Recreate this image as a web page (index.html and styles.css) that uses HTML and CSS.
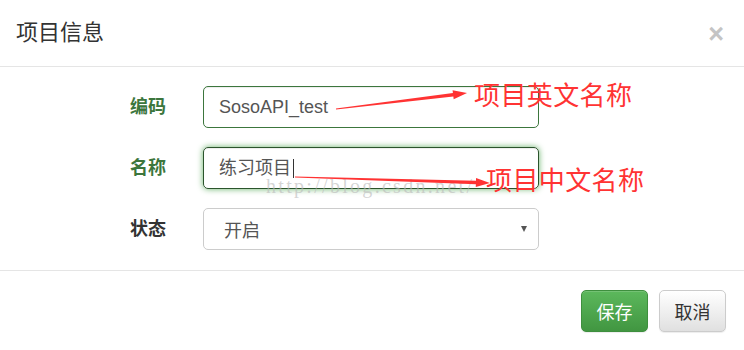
FILE: index.html
```html
<!DOCTYPE html>
<html lang="zh">
<head>
<meta charset="utf-8">
<title>项目信息</title>
<link rel="stylesheet" href="styles.css">
</head>
<body>
<div class="modal">
  <div class="modal-header">
    <h4 class="modal-title">项目信息</h4>
    <span class="close">×</span>
  </div>
  <div class="modal-body">
    <div class="form">
      <label class="label label-success">编码</label>
      <div class="control input-success">SosoAPI_test</div>
      <label class="label label-success">名称</label>
      <div class="control input-success input-focus">练习项目<span class="caret"></span></div>
      <label class="label">状态</label>
      <div class="control select"><span>开启</span><span class="select-arrow"></span></div>
    </div>
  </div>
  <div class="modal-footer">
    <button class="btn btn-success">保存</button>
    <button class="btn btn-default">取消</button>
  </div>
</div>

<div class="watermark">http://blog.csdn.net/</div>
<svg class="arrows" width="744" height="350" viewBox="0 0 744 350">
  <g transform="translate(336 109) rotate(-6.96)">
    <polygon points="0,-0.5 118,-1.7 118,-4.5 132,0 118,4.5 118,1.7 0,0.5" fill="#ff3333"/>
  </g>
  <g transform="translate(295 177) rotate(1.76)">
    <polygon points="0,-0.5 181,-1.7 181,-4.5 195,0 181,4.5 181,1.7 0,0.5" fill="#ff3333"/>
  </g>
</svg>
<div class="note note-en">项目英文名称</div>
<div class="note note-cn">项目中文名称</div>
</body>
</html>
```

FILE: styles.css
```css
html, body {
  margin: 0;
  padding: 0;
  background: #fff;
}
body {
  position: relative;
  width: 744px;
  height: 350px;
  overflow: hidden;
  font-family: "Liberation Sans", "Noto Sans CJK SC", sans-serif;
  color: #333;
}
.modal {
  width: 744px;
}
.modal-header {
  display: flex;
  justify-content: space-between;
  align-items: flex-start;
  height: 67px;
  box-sizing: border-box;
  padding: 15px 20px 0 16px;
  border-bottom: 1px solid #e5e5e5;
}
.modal-title {
  margin: 0;
  font-family: "Noto Sans CJK SC", sans-serif;
  font-weight: normal;
  font-size: 22px;
  line-height: 31px;
  color: #333;
}
.close {
  font-family: "Liberation Sans", sans-serif;
  font-weight: bold;
  font-size: 27px;
  line-height: 27px;
  margin-top: 6px;
  color: #c4c4c4;
}
.modal-body {
  padding: 19px 0 20px 0;
  border-bottom: 1px solid #e5e5e5;
}
.form {
  display: grid;
  grid-template-columns: 166px 336px;
  column-gap: 37px;
  row-gap: 19px;
}
.label {
  font-family: "Noto Sans CJK SC", sans-serif;
  font-weight: bold;
  font-size: 18px;
  line-height: 26px;
  padding-top: 6px;
  text-align: right;
  color: #333;
}
.label-success {
  color: #3c763d;
}
.control {
  height: 42px;
  box-sizing: border-box;
  border: 1px solid #ccc;
  border-radius: 5px;
  padding: 0 15px;
  display: flex;
  align-items: center;
  font-size: 18px;
  line-height: 26px;
  color: #555;
  box-shadow: inset 0 1px 1px rgba(0,0,0,.075);
}
.input-success {
  border-color: #3c763d;
}
.input-focus {
  border-color: #2b542c;
  box-shadow: inset 0 1px 1px rgba(0,0,0,.075), 0 0 6px #67b168;
}
.caret {
  display: inline-block;
  width: 1px;
  height: 19px;
  margin-left: 2px;
  background: #333;
}
.select {
  justify-content: space-between;
  padding: 0 11px 0 20px;
  box-shadow: none;
  font-family: "Noto Sans CJK SC", sans-serif;
}
.select-arrow {
  width: 0;
  height: 0;
  border-left: 3.5px solid transparent;
  border-right: 3.5px solid transparent;
  border-top: 6px solid #555;
}
.modal-footer {
  display: flex;
  justify-content: flex-end;
  gap: 11px;
  padding: 19px 18px 19px 0;
}
.btn {
  width: 67px;
  height: 42px;
  box-sizing: border-box;
  border-radius: 5px;
  font-family: "Noto Sans CJK SC", sans-serif;
  font-size: 18px;
  line-height: 26px;
  padding: 0;
}
.btn-success {
  color: #fff;
  border: 1px solid #3e8f3e;
  background: linear-gradient(to bottom, #5cb85c 0%, #419641 100%);
  box-shadow: inset 0 1px 0 rgba(255,255,255,.15), 0 1px 1px rgba(0,0,0,.075);
}
.btn-default {
  color: #333;
  border: 1px solid #ccc;
  background: linear-gradient(to bottom, #fff 0%, #e0e0e0 100%);
  box-shadow: inset 0 1px 0 rgba(255,255,255,.15), 0 1px 1px rgba(0,0,0,.075);
}
.watermark {
  position: absolute;
  left: 266px;
  top: 174px;
  font-family: "Liberation Serif", serif;
  font-size: 20px;
  letter-spacing: 2.3px;
  line-height: 24px;
  color: rgba(185,185,185,0.6);
  pointer-events: none;
}
.arrows {
  position: absolute;
  left: 0;
  top: 0;
  pointer-events: none;
}
.note {
  position: absolute;
  font-family: "Noto Sans CJK SC", sans-serif;
  font-size: 26px;
  line-height: 26px;
  letter-spacing: 0.4px;
  color: #ff3333;
  white-space: nowrap;
}
.note-en {
  left: 474px;
  top: 81px;
}
.note-cn {
  left: 486px;
  top: 166px;
}
```
